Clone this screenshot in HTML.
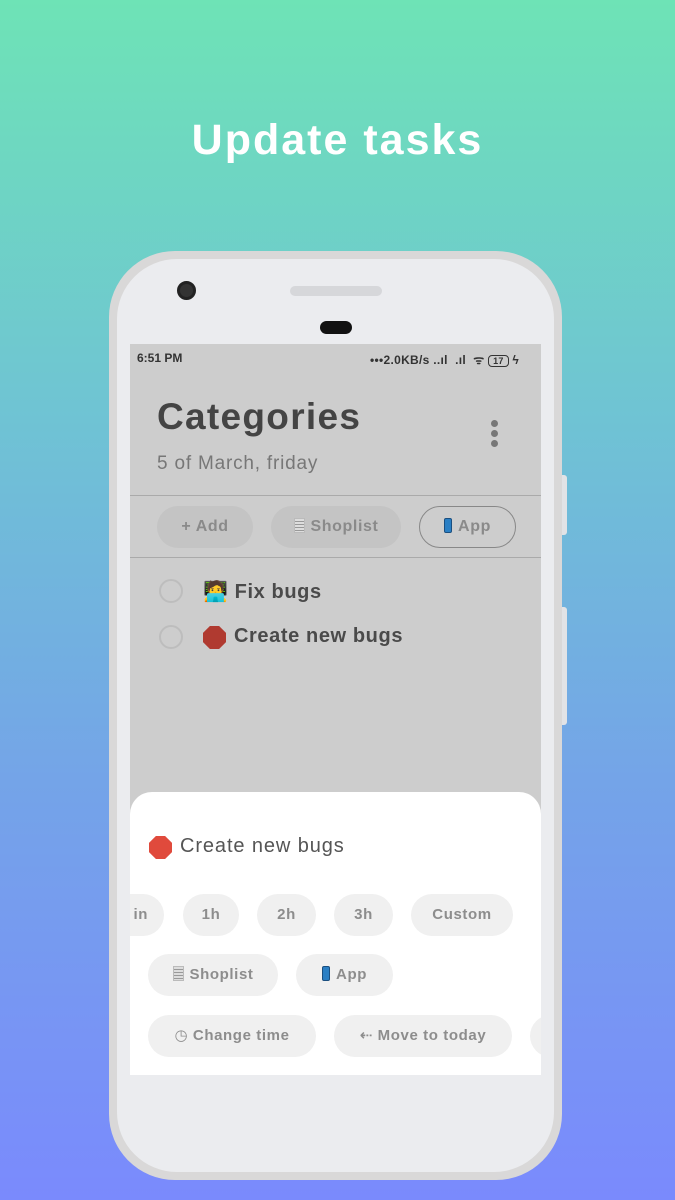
<!DOCTYPE html>
<html><head><meta charset="utf-8"><style>
*{margin:0;padding:0;box-sizing:border-box}
body{width:675px;height:1200px;overflow:hidden;position:relative;font-family:"Liberation Sans","DejaVu Sans",sans-serif;background:linear-gradient(180deg,#6ee3b6 0%,#6fc3d4 35%,#74a4e8 65%,#7a8afd 100%)}
.h{position:absolute;top:116px;left:0;width:675px;text-align:center;color:#fff;font-size:43px;font-weight:bold;letter-spacing:2px}
.outer{position:absolute;left:109px;top:251px;width:453px;height:929px;background:#d9d8d8;border-radius:66px}
.inner{position:absolute;left:117px;top:259px;width:437px;height:913px;background:#ebecef;border-radius:60px}
.btn{position:absolute;left:561px;width:6px;background:#e2e3e6;border-radius:0 3px 3px 0}
.screen{position:absolute;left:130px;top:344px;width:411px;height:731px;background:#cdcdcd;overflow:hidden}
.t{position:absolute;color:#4a4a4a;white-space:nowrap}
.chip{position:absolute;height:42px;border-radius:21px;background:#c4c4c4;color:#8a8a8a;font-size:16px;font-weight:bold;line-height:42px;text-align:center;letter-spacing:0.6px}
.sheet{position:absolute;left:0;top:448px;width:411px;height:283px;background:#fff;border-radius:22px 22px 0 0}
.c2{position:absolute;height:42px;border-radius:21px;background:#f0f0f0;color:#8d8d8d;font-size:15px;font-weight:bold;line-height:42px;text-align:center;letter-spacing:0.6px}
.circ{position:absolute;left:29px;width:24px;height:24px;border:2px solid #bdbdbd;border-radius:50%}
.ph{display:inline-block;width:8px;height:15px;border-radius:2px;background:#2a7fc4;border:1px solid #1a4f80;vertical-align:-2px;margin-right:6px}
.doc{display:inline-block;width:11px;height:15px;background:repeating-linear-gradient(#ddd 0 2px,#999 2px 3px);border:1px solid #bbb;vertical-align:-2px;margin-right:6px}
.oct{position:absolute;width:23px;height:23px;clip-path:polygon(30% 0,70% 0,100% 30%,100% 70%,70% 100%,30% 100%,0 70%,0 30%)}
</style></head><body>
<div class="h">Update tasks</div>
<div class="btn" style="top:475px;height:60px"></div>
<div class="btn" style="top:607px;height:118px"></div>
<div class="outer"></div>
<div class="inner"></div>
<div style="position:absolute;left:177px;top:281px;width:19px;height:19px;border-radius:50%;background:#333;border:3px solid #222"></div>
<div style="position:absolute;left:290px;top:286px;width:92px;height:10px;border-radius:5px;background:#d6d7da"></div>
<div style="position:absolute;left:320px;top:321px;width:32px;height:13px;border-radius:7px;background:#111"></div>
<div class="screen">
 <div class="t" style="left:7px;top:7px;font-size:12px;font-weight:bold;color:#333">6:51 PM</div>
 <div class="t" style="left:240px;top:7px;font-size:12px;font-weight:bold;color:#333;letter-spacing:0.3px">•••2.0KB/s ..ıl &nbsp;.ıl &nbsp;ᯤ <span style="border:1px solid #333;border-radius:4px;padding:0 4px;font-size:9px">17</span> ϟ</div>
 <div class="t" style="left:27px;top:52px;font-size:37px;font-weight:bold;color:#444;letter-spacing:1.3px">Categories</div>
 <div style="position:absolute;left:361px;top:76px;width:7px;height:7px;border-radius:50%;background:#777;box-shadow:0 10px 0 #777,0 20px 0 #777"></div>
 <div class="t" style="left:27px;top:109px;font-size:19px;color:#777;letter-spacing:0.8px">5 of March, friday</div>
 <div style="position:absolute;left:0;top:151px;width:411px;height:1px;background:#aaa"></div>
 <div class="chip" style="left:27px;top:162px;width:96px">+ Add</div>
 <div class="chip" style="left:141px;top:162px;width:130px"><span class="doc"></span>Shoplist</div>
 <div class="chip" style="left:289px;top:162px;width:97px;background:transparent;border:1px solid #888;line-height:40px"><span class="ph"></span>App</div>
 <div style="position:absolute;left:0;top:213px;width:411px;height:1px;background:#aaa"></div>
 <div class="circ" style="top:235px"></div>
 <div class="t" style="left:73px;top:235px;font-size:20px;font-weight:bold;letter-spacing:0.6px">🧑‍💻 Fix bugs</div>
 <div class="circ" style="top:281px"></div>
 <div class="oct" style="left:73px;top:282px;background:#b03a30"></div>
 <div class="t" style="left:104px;top:281px;font-size:20px;font-weight:bold;letter-spacing:0.6px">Create new bugs</div>
 <div class="sheet">
  <div class="oct" style="left:19px;top:44px;background:#e04a3c"></div>
  <div class="t" style="left:50px;top:43px;font-size:20px;color:#555;letter-spacing:0.9px">Create new bugs</div>
  <div class="c2" style="left:-30px;top:102px;width:64px;text-align:right;padding-right:16px">in</div>
  <div class="c2" style="left:53px;top:102px;width:56px">1h</div>
  <div class="c2" style="left:127px;top:102px;width:59px">2h</div>
  <div class="c2" style="left:204px;top:102px;width:59px">3h</div>
  <div class="c2" style="left:281px;top:102px;width:102px">Custom</div>
  <div class="c2" style="left:18px;top:162px;width:130px"><span class="doc"></span>Shoplist</div>
  <div class="c2" style="left:166px;top:162px;width:97px"><span class="ph"></span>App</div>
  <div class="c2" style="left:18px;top:223px;width:168px">◷ Change time</div>
  <div class="c2" style="left:204px;top:223px;width:178px">⇠ Move to today</div>
  <div class="c2" style="left:400px;top:223px;width:60px"></div>
 </div>
</div>
</body></html>
